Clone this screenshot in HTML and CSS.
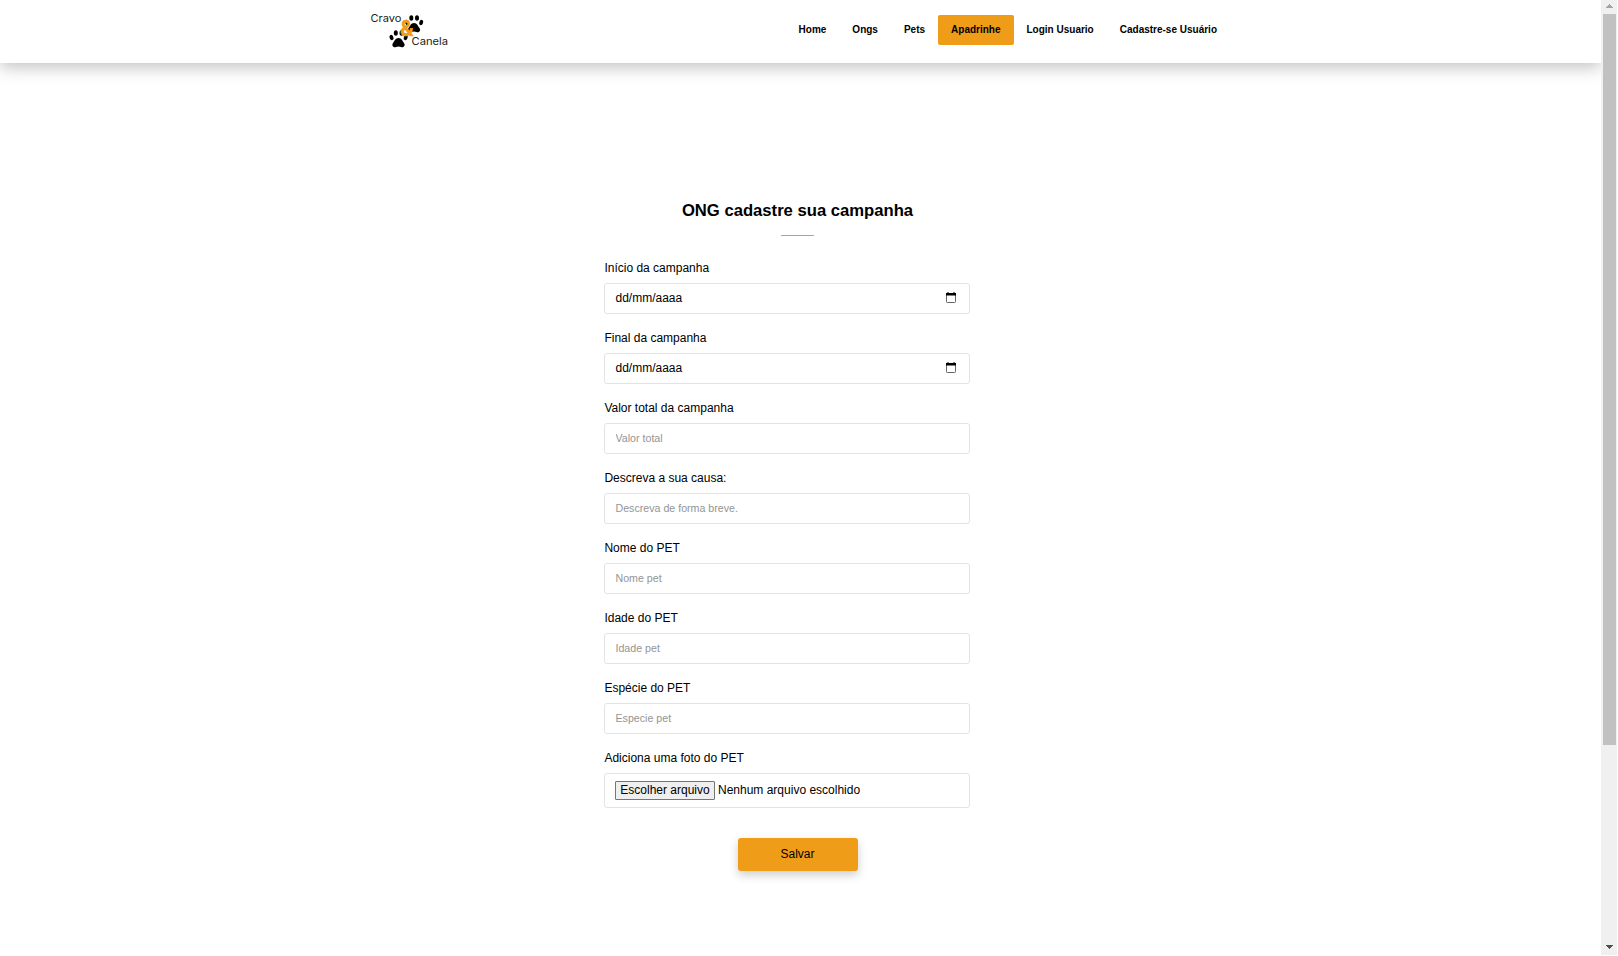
FILE: index.html
```html
<!DOCTYPE html>
<html lang="pt-BR">
<head>
<meta charset="utf-8">
<title>Cravo &amp; Canela</title>
<link rel="stylesheet" href="styles.css">
</head>
<body>
<div class="page">
  <header class="header">
    <svg class="logo" width="80" height="40" viewBox="370 10 80 40">
      <defs>
        <g id="paw">
          <ellipse cx="-7" cy="-.5" rx="1.9" ry="2.7" transform="rotate(-22 -7 -.5)"/>
          <ellipse cx="-2.7" cy="-5" rx="2" ry="2.8"/>
          <ellipse cx="3" cy="-5" rx="2" ry="2.8"/>
          <ellipse cx="7.2" cy="-.5" rx="1.9" ry="2.7" transform="rotate(22 7.2 -.5)"/>
          <path d="M0 0C3 0 4 3 5.5 5C7.500 8 4.500 10 2.500 9Q0 8 -2.500 9C-4.500 10 -7.500 8 -5.500 5C-4 3 -3 0 0 0Z"/>
        </g>
      </defs>
      <use href="#paw" x="414" y="23"/>
      <use href="#paw" x="398.500" y="38"/>
      <text class="logo-name" x="370.500" y="21.500" textLength="31" lengthAdjust="spacingAndGlyphs">Cravo</text>
      <text class="logo-name" x="411.500" y="44.500" textLength="36.500" lengthAdjust="spacingAndGlyphs">Canela</text>
      <text class="logo-amp" x="400" y="35.700" textLength="13.500" lengthAdjust="spacingAndGlyphs">&amp;</text>
    </svg>
    <nav class="nav">
      <a class="nav-link">Home</a>
      <a class="nav-link">Ongs</a>
      <a class="nav-link">Pets</a>
      <a class="nav-link active">Apadrinhe</a>
      <a class="nav-link">Login Usuario</a>
      <a class="nav-link">Cadastre-se Usuário</a>
    </nav>
  </header>
  <main class="main">
    <h1 class="title">ONG cadastre sua campanha</h1>
    <div class="rule"></div>
    <form class="form">
      <div class="field"><label class="label">Início da campanha</label>
        <div class="control date"><span>dd/mm/aaaa</span><svg width="10" height="12" viewBox="0 0 10 12"><path d="M1.500 0h1v1h-1zM7.500 0h1v1h-1z"/><rect x=".5" y="1.500" width="9" height="9" rx=".8" fill="none" stroke="#666"/><path d="M0 1h10v2.500H0z"/></svg></div></div>
      <div class="field"><label class="label">Final da campanha</label>
        <div class="control date"><span>dd/mm/aaaa</span><svg width="10" height="12" viewBox="0 0 10 12"><path d="M1.500 0h1v1h-1zM7.500 0h1v1h-1z"/><rect x=".5" y="1.500" width="9" height="9" rx=".8" fill="none" stroke="#666"/><path d="M0 1h10v2.500H0z"/></svg></div></div>
      <div class="field"><label class="label">Valor total da campanha</label><input class="control" placeholder="Valor total"></div>
      <div class="field"><label class="label">Descreva a sua causa:</label><input class="control" placeholder="Descreva de forma breve."></div>
      <div class="field"><label class="label">Nome do PET</label><input class="control" placeholder="Nome pet"></div>
      <div class="field"><label class="label">Idade do PET</label><input class="control" placeholder="Idade pet"></div>
      <div class="field"><label class="label">Espécie do PET</label><input class="control" placeholder="Especie pet"></div>
      <div class="field"><label class="label">Adiciona uma foto do PET</label>
        <div class="control file"><button type="button" class="choose">Escolher arquivo</button><span>Nenhum arquivo escolhido</span></div></div>
    </form>
    <button type="button" class="save">Salvar</button>
  </main>
</div>
<div class="scrollbar">
  <svg class="arrow" width="7" height="4" viewBox="0 0 7 4" shape-rendering="crispEdges"><path fill="#a3a3a3" d="M3 0h1v1h1v1h1v1h1v1H0V3h1V2h1V1h1z"/></svg>
  <div class="thumb"></div>
  <svg class="arrow down" width="7" height="4" viewBox="0 0 7 4" shape-rendering="crispEdges"><path fill="#505050" d="M0 0h7v1H6v1H5v1H4v1H3V3H2V2H1V1H0z"/></svg>
</div>
</body>
</html>
```
FILE: styles.css
```css
* { box-sizing: border-box; }
body {
  margin: 0;
  height: 956px;
  display: flex;
  overflow: hidden;
  background: #fff;
  color: #000;
  font: 12px/14px "Liberation Sans", Arial, sans-serif;
}
.page { width: 1601px; height: 955px; overflow: hidden; }
.header {
  height: 63px;
  padding: 10px 371px 0 370px;
  display: flex;
  justify-content: space-between;
  align-items: flex-start;
  box-shadow: 0 4px 16px rgba(0, 0, 0, .25);
}
.logo { display: block; }
.logo-name { font: 400 10.5px Inter, sans-serif; fill: #222; }
.logo-amp { font: 700 21px Inter, sans-serif; fill: #ef9d19; stroke: #ef9d19; stroke-width: .5px; }
.nav { display: flex; padding-top: 5px; }
.nav-link {
  height: 30px;
  padding: 0 13px;
  font-size: 10px;
  font-weight: 700;
  line-height: 30px;
  border-radius: 2px;
}
.active { background: #ef9d19; }
.main {
  width: 387px;
  margin: 138px 0 0 604px;
  display: flex;
  flex-direction: column;
  align-items: center;
}
.title { margin: 0; font-size: 16.65px; line-height: 20px; }
.rule { width: 33px; height: 1px; margin-top: 14px; background: #ef9d19; }
.form { align-self: flex-start; width: 366px; margin-top: 25px; }
.field { display: flex; flex-direction: column; gap: 7px; margin-bottom: 17px; }
.label { height: 15px; line-height: 15px; padding-left: .4px; }
.control {
  width: 366px;
  height: 31px;
  padding: 0 10px 2px 10.5px;
  border: 1px solid #e3e3e3;
  border-radius: 3px;
  background: #fff;
  font: 12px/14px "Liberation Sans", Arial, sans-serif;
}
.control::placeholder { color: #949494; font-size: 10.65px; opacity: 1; }
.date { display: flex; align-items: center; justify-content: space-between; padding: 0 13px 1px 10.5px; }
.file { height: 35px; display: flex; align-items: center; gap: 3px; padding: 0 10px 1px; }
.choose {
  width: 100px;
  height: 19px;
  padding: 0;
  border: 1px solid #767676;
  border-radius: 1px;
  background: #efefef;
  font: 12px/14px "Liberation Sans", Arial, sans-serif;
}
.save {
  width: 120px;
  height: 33px;
  margin-top: 13px;
  padding: 0 0 1px;
  border: 0;
  border-radius: 3px;
  background: #ef9d19;
  box-shadow: 0 4px 10px rgba(0, 0, 0, .2);
  color: #000;
  font: 12px/14px "Liberation Sans", Arial, sans-serif;
}
.scrollbar {
  width: 16px;
  height: 955px;
  background: #f0f0f0;
  display: flex;
  flex-direction: column;
  align-items: center;
}
.arrow { margin: 4px 0 0 1px; flex: none; }
.thumb { width: 13px; height: 731px; margin-top: 6px; background: #c1c1c1; }
.down { margin-top: auto; margin-bottom: 6px; }
```
